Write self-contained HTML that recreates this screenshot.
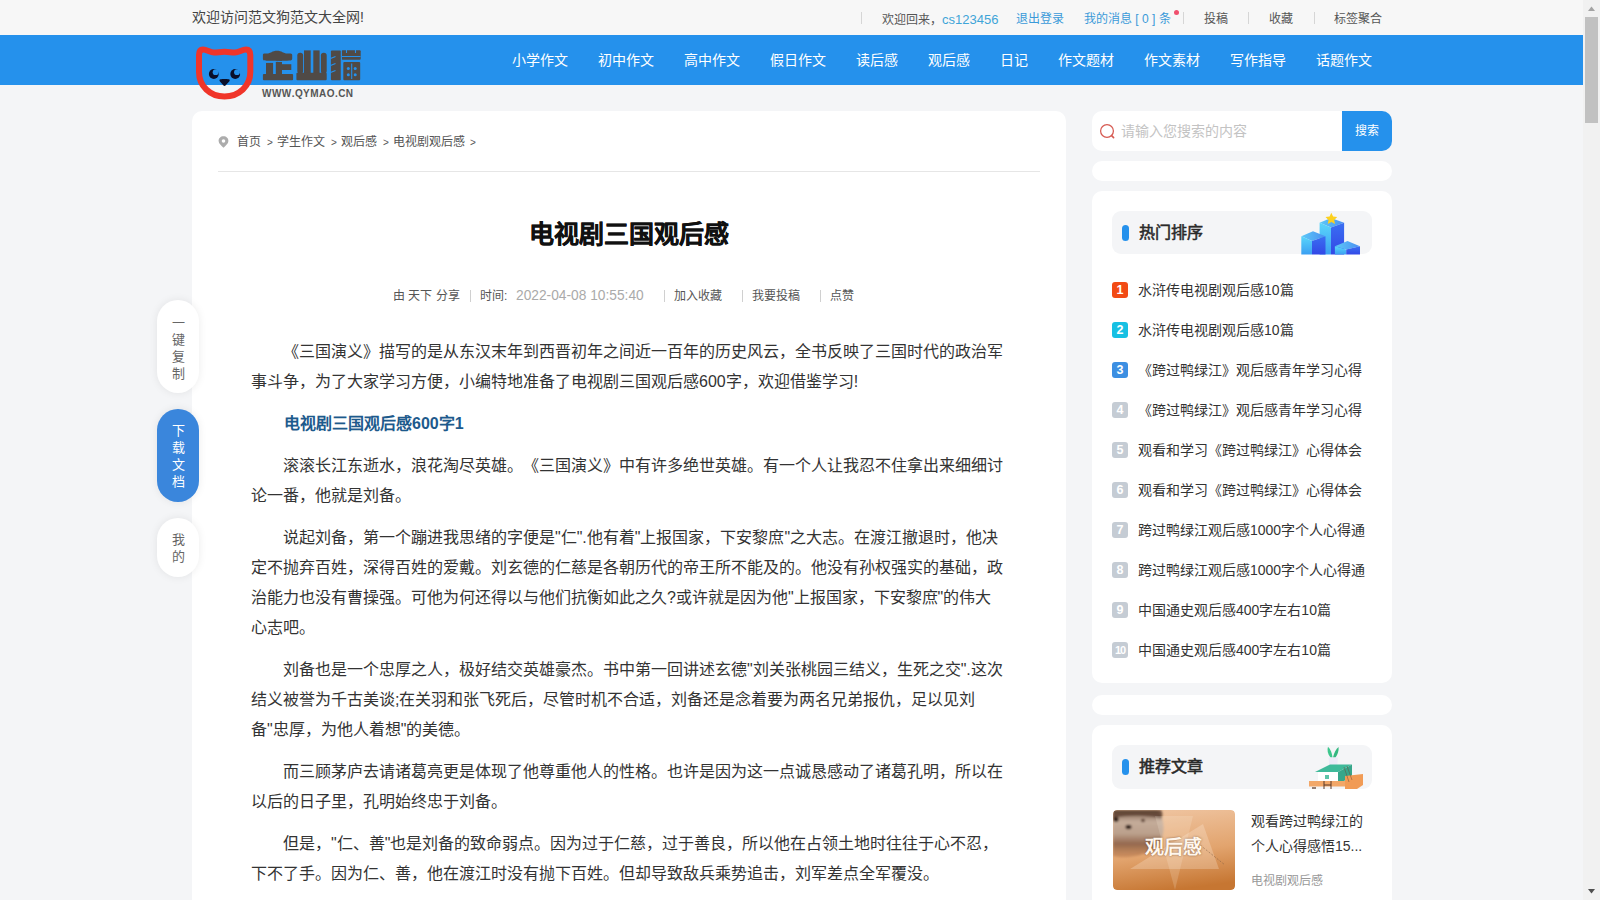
<!DOCTYPE html>
<html lang="zh-CN"><head><meta charset="utf-8">
<style>
*{margin:0;padding:0;box-sizing:border-box}
html,body{width:1600px;height:900px;overflow:hidden}
body{text-spacing-trim:space-all;font-kerning:none;background:#f4f5f7;font-family:"Liberation Sans",sans-serif;color:#333;position:relative}
.abs{position:absolute}
.nw{white-space:nowrap}
#topbar{left:0;top:0;width:1583px;height:35px;background:#f7f7f7}
#header{left:0;top:35px;width:1583px;height:50px;background:#2591ec}
.nav{top:35px;height:50px;line-height:50px;font-size:14px;color:#fff}
.tl{top:1.5px;height:35px;line-height:35px;font-size:12px;color:#555}
.sep{width:1px;height:12px;background:#d6d6d6;top:12px}
.card{background:#fff;border-radius:10px}
.crumb{font-size:12px;color:#555;top:133px;line-height:18px}
.p{left:251px;font-size:16px;line-height:30px;color:#333;white-space:nowrap}
.meta{top:288px;font-size:12px;line-height:16px;color:#555}
.msep{top:290px;width:1px;height:12px;background:#d0d0d0}
.hot{left:1138px;font-size:14px;color:#333;line-height:20px;white-space:nowrap}
.badge{left:1112px;width:16px;height:16px;border-radius:3px;color:#fff;font-size:12.5px;line-height:17px;text-align:center;font-weight:bold}
.side{left:157px;width:42px;border-radius:21px;background:#fff;box-shadow:0 0 8px rgba(0,0,0,.08);font-size:13px;line-height:17px;text-align:center;color:#666}
</style></head><body>

<!-- top bar -->
<div id="topbar" class="abs"></div>
<div class="abs tl nw" style="left:192px;top:0;font-size:14px;color:#444">欢迎访问范文狗范文大全网!</div>
<div class="abs sep" style="left:861px"></div>
<div class="abs tl nw" style="left:882px">欢迎回来，<span style="color:#3fa5d8;font-size:13px">cs123456</span></div>
<div class="abs tl nw" style="left:1016px;color:#3a9ad9">退出登录</div>
<div class="abs tl nw" style="left:1084px;color:#3a9ad9">我的消息 [ 0 ] 条</div>
<div class="abs" style="left:1174px;top:10px;width:5px;height:5px;border-radius:50%;background:#f0506e"></div>
<div class="abs sep" style="left:1183px"></div>
<div class="abs tl nw" style="left:1204px">投稿</div>
<div class="abs sep" style="left:1248px"></div>
<div class="abs tl nw" style="left:1269px">收藏</div>
<div class="abs sep" style="left:1314px"></div>
<div class="abs tl nw" style="left:1334px">标签聚合</div>

<!-- header -->
<div id="header" class="abs"></div>
<div class="abs nav nw" style="left:512px">小学作文</div>
<div class="abs nav nw" style="left:598px">初中作文</div>
<div class="abs nav nw" style="left:684px">高中作文</div>
<div class="abs nav nw" style="left:770px">假日作文</div>
<div class="abs nav nw" style="left:856px">读后感</div>
<div class="abs nav nw" style="left:928px">观后感</div>
<div class="abs nav nw" style="left:1000px">日记</div>
<div class="abs nav nw" style="left:1058px">作文题材</div>
<div class="abs nav nw" style="left:1144px">作文素材</div>
<div class="abs nav nw" style="left:1230px">写作指导</div>
<div class="abs nav nw" style="left:1316px">话题作文</div>

<!-- logo -->
<svg class="abs" style="left:192px;top:40px" width="64" height="64" viewBox="0 0 64 64">
  <path d="M7 15 C 7 11, 8.5 9.5, 11 9.5 C 15 9.5, 18 12.5, 22 12.5 C 26 12.5, 28 11.8, 32.5 11.8 C 37 11.8, 39 12.5, 43 12.5 C 47 12.5, 50 9.5, 54 9.5 C 56.5 9.5, 58.3 11, 58.3 15 L 58.3 32 C 58.3 46, 47 56.5, 32.5 56.5 C 18 56.5, 7 46, 7 32 Z" fill="none" stroke="#f0352a" stroke-width="6" stroke-linejoin="round"/>
  <mask id="em"><rect width="64" height="64" fill="#fff"/><circle cx="23.6" cy="32.2" r="2.9" fill="#000"/><circle cx="45" cy="32.2" r="2.9" fill="#000"/></mask>
  <g mask="url(#em)"><circle cx="21.8" cy="34" r="4.9" fill="#0a0f2a"/><circle cx="43.2" cy="34" r="4.9" fill="#0a0f2a"/></g>
  
  <path d="M28.5 39.3 C 30 39, 35 39, 36.8 39.3 C 38 39.5, 38 40.5, 37.2 41.5 L 33.5 45.5 C 33 46, 32 46, 31.5 45.5 L 28 41.5 C 27.2 40.5, 27.3 39.5, 28.5 39.3 Z" fill="#0a0f2a"/>
</svg>
<svg class="abs" style="left:258px;top:46px" width="108" height="40" viewBox="0 0 108 40">
  <g fill="#504a46">
  <path d="M4.9 9 C 4.9 7.2, 6.5 7.6, 10 7.6 L 13.5 6.2 C 16 4.2, 22 4.2, 24.5 6.2 L 28 7.6 C 32 7.6, 34.2 7.2, 34.2 9 L 34.2 12.8 C 34.2 14.8, 32 14.7, 28 14.7 L 11 14.7 C 6.5 14.7, 4.9 14.8, 4.9 12.8 Z"/>
  <rect x="8" y="16.9" width="7.1" height="14"/>
  <rect x="17.8" y="14.2" width="6.2" height="16"/>
  <rect x="24" y="18.2" width="9.3" height="5.8"/>
  <rect x="4.9" y="28" width="30.2" height="6.2" rx="1"/>
  <rect x="39.3" y="6.7" width="5.8" height="21" rx="2.8"/>
  <rect x="46" y="4.4" width="6.7" height="24"/>
  <rect x="55.3" y="4.4" width="6.3" height="24"/>
  <rect x="62.9" y="6.7" width="5.8" height="21" rx="2.8"/>
  <rect x="38.4" y="26.7" width="30.3" height="7.5" rx="1"/>
  <rect x="72.9" y="4.6" width="10.2" height="29.6" rx="1"/>
  <rect x="83.6" y="4.2" width="19.1" height="9.6" rx="1"/>
  <rect x="85.3" y="16" width="16.9" height="18.2" rx="1"/>
  </g>
  <g stroke="#2591ec" stroke-width="1.1" fill="none">
  <path d="M72.5 12.5 L 77.5 10.5 M72.5 19.5 L 77.5 17.5 M72.5 26.5 L 77.5 24.5 M83.3 4 L 83.3 35"/>
  <path d="M88.5 4 L 88.5 7 M 97.5 4 L 97.5 7 M 84 10.5 L 102.5 10.5"/>
  <path d="M93.7 17.5 L 93.7 33"/>
  </g>
  <g fill="#2591ec"><circle cx="90.3" cy="22.5" r="1.5"/><circle cx="97.2" cy="22.5" r="1.5"/><circle cx="90.3" cy="28.8" r="1.5"/><circle cx="97.2" cy="28.8" r="1.5"/></g>
  <path d="M7 16 C 14 15.2, 24 15.2, 32 16" stroke="#2591ec" stroke-width="1" fill="none"/>
</svg>
<div class="abs nw" style="left:262px;top:88px;font-size:10px;line-height:11px;font-weight:bold;color:#555;letter-spacing:0.45px">WWW.QYMAO.CN</div>

<!-- main card -->
<div class="abs card" style="left:192px;top:111px;width:874px;height:820px"></div>
<svg class="abs" style="left:218px;top:136px" width="11" height="12" viewBox="0 0 11 12">
  <path d="M5.5 0.3 C 2.5 0.3, 0.6 2.4, 0.6 5 C 0.6 7.6, 3.5 9.8, 5.5 11.7 C 7.5 9.8, 10.4 7.6, 10.4 5 C 10.4 2.4, 8.5 0.3, 5.5 0.3 Z M5.5 3.2 a1.8 1.8 0 1 1 0 3.6 a1.8 1.8 0 1 1 0 -3.6z" fill="#acacac" fill-rule="evenodd"/>
</svg>
<div class="abs crumb nw" style="left:237px">首页</div>
<div class="abs crumb nw" style="left:267px;font-size:10px;top:134px">&gt;</div>
<div class="abs crumb nw" style="left:277px">学生作文</div>
<div class="abs crumb nw" style="left:331px;font-size:10px;top:134px">&gt;</div>
<div class="abs crumb nw" style="left:341px">观后感</div>
<div class="abs crumb nw" style="left:383px;font-size:10px;top:134px">&gt;</div>
<div class="abs crumb nw" style="left:393px">电视剧观后感</div>
<div class="abs crumb nw" style="left:470px;font-size:10px;top:134px">&gt;</div>
<div class="abs" style="left:218px;top:171px;width:822px;height:1px;background:#e6e6e6"></div>

<div class="abs nw" style="left:192px;width:874px;top:216px;text-align:center;font-size:25px;line-height:36px;font-weight:bold;color:#111;-webkit-text-stroke:0.35px #111">电视剧三国观后感</div>

<div class="abs meta nw" style="left:393px">由 天下 分享</div>
<div class="abs msep" style="left:470px"></div>
<div class="abs meta nw" style="left:480px">时间:</div>
<div class="abs meta nw" style="left:516px;color:#aaa;font-size:13.75px">2022-04-08 10:55:40</div>
<div class="abs msep" style="left:664px"></div>
<div class="abs meta nw" style="left:674px">加入收藏</div>
<div class="abs msep" style="left:742px"></div>
<div class="abs meta nw" style="left:752px">我要投稿</div>
<div class="abs msep" style="left:820px"></div>
<div class="abs meta nw" style="left:830px">点赞</div>

<div class="abs p" style="top:337px">　　《三国演义》描写的是从东汉末年到西晋初年之间近一百年的历史风云，全书反映了三国时代的政治军<br>事斗争，为了大家学习方便，小编特地准备了电视剧三国观后感600字，欢迎借鉴学习!</div>
<div class="abs p" style="top:409px;left:284px;font-weight:bold;color:#1d5a8c">电视剧三国观后感600字1</div>
<div class="abs p" style="top:451px">　　滚滚长江东逝水，浪花淘尽英雄。《三国演义》中有许多绝世英雄。有一个人让我忍不住拿出来细细讨<br>论一番，他就是刘备。</div>
<div class="abs p" style="top:523px">　　说起刘备，第一个蹦进我思绪的字便是"仁".他有着"上报国家，下安黎庶"之大志。在渡江撤退时，他决<br>定不抛弃百姓，深得百姓的爱戴。刘玄德的仁慈是各朝历代的帝王所不能及的。他没有孙权强实的基础，政<br>治能力也没有曹操强。可他为何还得以与他们抗衡如此之久?或许就是因为他"上报国家，下安黎庶"的伟大<br>心志吧。</div>
<div class="abs p" style="top:655px">　　刘备也是一个忠厚之人，极好结交英雄豪杰。书中第一回讲述玄德"刘关张桃园三结义，生死之交".这次<br>结义被誉为千古美谈;在关羽和张飞死后，尽管时机不合适，刘备还是念着要为两名兄弟报仇，足以见刘<br>备"忠厚，为他人着想"的美德。</div>
<div class="abs p" style="top:757px">　　而三顾茅庐去请诸葛亮更是体现了他尊重他人的性格。也许是因为这一点诚恳感动了诸葛孔明，所以在<br>以后的日子里，孔明始终忠于刘备。</div>
<div class="abs p" style="top:829px">　　但是，"仁、善"也是刘备的致命弱点。因为过于仁慈，过于善良，所以他在占领土地时往往于心不忍，<br>下不了手。因为仁、善，他在渡江时没有抛下百姓。但却导致敌兵乘势追击，刘军差点全军覆没。</div>

<!-- left floating -->
<div class="abs side" style="top:300px;height:93px;padding-top:14px">一<br>键<br>复<br>制</div>
<div class="abs side" style="top:409px;height:93px;padding-top:13px;background:#3a86dc;color:#fff">下<br>载<br>文<br>档</div>
<div class="abs side" style="top:518px;height:59px;padding-top:13px">我<br>的</div>

<!-- sidebar -->
<div class="abs" style="left:1092px;top:111px;width:250px;height:40px;background:#fff;border-radius:10px 0 0 10px"></div>
<div class="abs" style="left:1342px;top:111px;width:50px;height:40px;background:#2591ec;border-radius:0 10px 10px 0;color:#fff;font-size:12px;line-height:40px;text-align:center">搜索</div>
<svg class="abs" style="left:1098px;top:122px" width="20" height="20" viewBox="0 0 20 20">
  <circle cx="9" cy="9" r="6.4" fill="none" stroke="#d65a52" stroke-width="1.25"/>
  <path d="M13.6 13.6 L 15.6 15.6" stroke="#d65a52" stroke-width="1.6" stroke-linecap="round"/>
</svg>
<div class="abs nw" style="left:1121px;top:121px;font-size:14px;line-height:20px;color:#c3c3c3">请输入您搜索的内容</div>

<div class="abs card" style="left:1092px;top:161px;width:300px;height:20px"></div>

<div class="abs card" style="left:1092px;top:191px;width:300px;height:492px"></div>
<div class="abs" style="left:1112px;top:211px;width:260px;height:43px;background:#f4f5f7;border-radius:9px"></div>
<div class="abs" style="left:1122px;top:225px;width:7px;height:16px;background:#2591ec;border-radius:4px"></div>
<div class="abs nw" style="left:1139px;top:222px;font-size:16px;line-height:22px;color:#2a2a2a;-webkit-text-stroke:0.55px #2a2a2a">热门排序</div>
<!-- bar chart illustration -->
<svg class="abs" style="left:1299px;top:211px" width="62" height="44" viewBox="0 0 62 44">
  <defs>
    <linearGradient id="gtop" x1="0" y1="0" x2="1" y2="0"><stop offset="0" stop-color="#5cc9f7"/><stop offset="1" stop-color="#4b8ff2"/></linearGradient>
    <linearGradient id="gl" x1="0" y1="0" x2="0" y2="1"><stop offset="0" stop-color="#5ad6fb"/><stop offset="1" stop-color="#3b9ff2"/></linearGradient>
    <linearGradient id="gr" x1="0" y1="0" x2="0" y2="1"><stop offset="0" stop-color="#3a6ff2"/><stop offset="1" stop-color="#3348e6"/></linearGradient>
  </defs>
  <path d="M20.6 11.7 L 32 7 L 45.1 11.7 L 32 16.6 Z" fill="url(#gtop)"/>
  <path d="M20.6 11.7 L 32 16.6 L 32 43.5 L 20.6 43.5 Z" fill="url(#gl)"/>
  <path d="M32 16.6 L 45.1 11.7 L 45.1 43.5 L 32 43.5 Z" fill="url(#gr)"/>
  <path d="M2.3 25.2 L 14 20.3 L 26.5 25.2 L 13 30 Z" fill="url(#gtop)"/>
  <path d="M2.3 25.2 L 13 30 L 13 43.5 L 2.3 43.5 Z" fill="url(#gl)"/>
  <path d="M13 30 L 26.5 25.2 L 26.5 43.5 L 13 43.5 Z" fill="url(#gr)"/>
  <path d="M35.9 35.3 L 48.5 30 L 61 35.3 L 47.2 38.6 Z" fill="url(#gtop)"/>
  <path d="M35.9 35.3 L 47.2 38.6 L 47.2 43.5 L 35.9 43.5 Z" fill="url(#gl)"/>
  <path d="M47.2 38.6 L 61 35.3 L 61 43.5 L 47.2 43.5 Z" fill="url(#gr)"/>
  <path d="M32.3 1.8 L 34.1 5.6 L 38.2 6.1 L 35.2 8.9 L 36 13 L 32.4 11 L 28.8 13 L 29.5 8.9 L 26.5 6.1 L 30.6 5.6 Z" fill="#fcd020"/>
</svg>

<div class="abs badge" style="top:282px;background:#f24b15">1</div>
<div class="abs hot" style="top:280px">水浒传电视剧观后感10篇</div>
<div class="abs badge" style="top:322px;background:#17c0e3">2</div>
<div class="abs hot" style="top:320px">水浒传电视剧观后感10篇</div>
<div class="abs badge" style="top:362px;background:#3c8fe2">3</div>
<div class="abs hot" style="top:360px">《跨过鸭绿江》观后感青年学习心得</div>
<div class="abs badge" style="top:402px;background:#c5ccd4">4</div>
<div class="abs hot" style="top:400px">《跨过鸭绿江》观后感青年学习心得</div>
<div class="abs badge" style="top:442px;background:#c5ccd4">5</div>
<div class="abs hot" style="top:440px">观看和学习《跨过鸭绿江》心得体会</div>
<div class="abs badge" style="top:482px;background:#c5ccd4">6</div>
<div class="abs hot" style="top:480px">观看和学习《跨过鸭绿江》心得体会</div>
<div class="abs badge" style="top:522px;background:#c5ccd4">7</div>
<div class="abs hot" style="top:520px">跨过鸭绿江观后感1000字个人心得通</div>
<div class="abs badge" style="top:562px;background:#c5ccd4">8</div>
<div class="abs hot" style="top:560px">跨过鸭绿江观后感1000字个人心得通</div>
<div class="abs badge" style="top:602px;background:#c5ccd4">9</div>
<div class="abs hot" style="top:600px">中国通史观后感400字左右10篇</div>
<div class="abs badge" style="top:642px;background:#c5ccd4;font-size:11px;letter-spacing:-1px">10</div>
<div class="abs hot" style="top:640px">中国通史观后感400字左右10篇</div>

<div class="abs card" style="left:1092px;top:695px;width:300px;height:20px"></div>

<div class="abs card" style="left:1092px;top:725px;width:300px;height:300px"></div>
<div class="abs" style="left:1112px;top:745px;width:260px;height:44px;background:#f4f5f7;border-radius:9px"></div>
<div class="abs" style="left:1122px;top:759px;width:7px;height:16px;background:#2591ec;border-radius:4px"></div>
<div class="abs nw" style="left:1139px;top:756px;font-size:16px;line-height:22px;color:#2a2a2a;-webkit-text-stroke:0.55px #2a2a2a">推荐文章</div>
<svg class="abs" style="left:1305px;top:745px" width="62" height="46" viewBox="0 0 62 46">
  <path d="M25.5 12.5 C 22.5 9, 22 5, 23 1.8 C 25.5 4, 27 8, 27.5 12.5 Z" fill="#3cc68c"/>
  <path d="M28 12.5 C 29 8, 31 4, 33.6 2 C 34 6, 32.5 10, 30.5 12.5 Z" fill="#34b880"/>
  <path d="M23.5 12.5 L 33 12.5 L 32 22.5 L 24.5 22.5 Z" fill="#eceaf7"/>
  <path d="M10 27 L 25 19.5 L 47 19.5 L 33 27 Z" fill="#3fba9a"/>
  <path d="M33 27 L 47 19.5 L 47 33 L 33 38 Z" fill="#36a68a"/>
  <path d="M13 27 L 33 27 L 33 38 L 13 38 Z" fill="#ffffff"/>
  <path d="M20 30 L 24 30 L 24 34 L 20 34 Z" fill="#5cc4a8"/>
  <path d="M4 36 L 40 36 L 40 41.5 L 4 41.5 Z" fill="#f2a768"/>
  <path d="M40 31 L 58 29 L 58 40 L 52 44 L 40 44 Z" fill="#f19b55"/>
  <path d="M19 36 L 19 44 M 26 36 L 26 44 M19 40 L 26 40" stroke="#5a3a2a" stroke-width="1"/>
  <path d="M39 22 L 44 37 M 42 21 L 47 35" stroke="#6a4a3a" stroke-width="0.7" opacity="0.7"/>
  <path d="M7 42 L 11 42 L 11 44 L 7 44 Z" fill="#6a4a3a" opacity="0.7"/>
</svg>

<!-- thumbnail -->
<svg class="abs" style="left:1113px;top:810px;border-radius:4px" width="122" height="80" viewBox="0 0 122 80">
  <defs>
    <linearGradient id="tb" x1="0.3" y1="0" x2="0.5" y2="1"><stop offset="0" stop-color="#efc4a0"/><stop offset="0.55" stop-color="#e2a46e"/><stop offset="1" stop-color="#c67632"/></linearGradient>
    <linearGradient id="pot2" x1="0" y1="0" x2="0" y2="1"><stop offset="0" stop-color="#7a5a48"/><stop offset="0.25" stop-color="#c4ac9a"/><stop offset="0.5" stop-color="#bba08c"/><stop offset="0.72" stop-color="#94684e"/><stop offset="1" stop-color="#c08052" stop-opacity="0.6"/></linearGradient>
    <clipPath id="tc"><rect width="122" height="80" rx="4"/></clipPath><filter id="bl" x="-20%" y="-20%" width="140%" height="140%"><feGaussianBlur stdDeviation="0.9"/></filter>
  </defs>
  <g clip-path="url(#tc)">
  <rect width="122" height="80" fill="url(#tb)"/>
  <g filter="url(#bl)"><path d="M0 0 L 44 0 C 50 6, 53 18, 48 30 C 42 44, 16 50, 0 46 Z" fill="url(#pot2)"/>
  <path d="M0 0 L 48 0 C 50 3, 50 6, 48 8.5 C 35 5, 15 5, 0 8 Z" fill="#5e4232" opacity="0.85"/>
  <ellipse cx="3" cy="9.5" rx="2.6" ry="2.4" fill="#2e1c12"/>
  <ellipse cx="15.5" cy="17" rx="3" ry="2.2" fill="#2e1c12"/>
  <ellipse cx="30" cy="10.5" rx="2" ry="1.7" fill="#4a3022" opacity="0.85"/>
  </g>
  <path d="M90 14 L 106 59 L 17 59 Z" fill="#fff3e6" opacity="0.25"/>
  <path d="M42 6 L 80 6 L 62 80 Z" fill="#fff3e6" opacity="0.18"/>
  <path d="M82 31 L 112 55" stroke="#7a5a40" stroke-width="1" stroke-dasharray="2 1.5" opacity="0.5"/>
  </g>
</svg>
<div class="abs nw" style="left:1145px;top:836px;font-size:19px;line-height:24px;font-weight:bold;color:#fff7ee;text-shadow:0 0 2px rgba(90,50,20,.7)">观后感</div>
<div class="abs nw" style="left:1251px;top:809px;font-size:14px;line-height:25px;color:#333">观看跨过鸭绿江的<br>个人心得感悟15...</div>
<div class="abs nw" style="left:1251px;top:872px;font-size:12px;line-height:18px;color:#999">电视剧观后感</div>

<!-- scrollbar -->
<div class="abs" style="left:1583px;top:0;width:17px;height:900px;background:#f1f1f1"></div>
<div class="abs" style="left:1585px;top:17px;width:13px;height:106px;background:#c1c1c1"></div>
<svg class="abs" style="left:1583px;top:0" width="17" height="900" viewBox="0 0 17 900">
  <path d="M5 11 L 12 11 L 8.5 6.5 Z" fill="#a3a3a3"/>
  <path d="M5 889 L 12 889 L 8.5 893.5 Z" fill="#505050"/>
</svg>
</body></html>
